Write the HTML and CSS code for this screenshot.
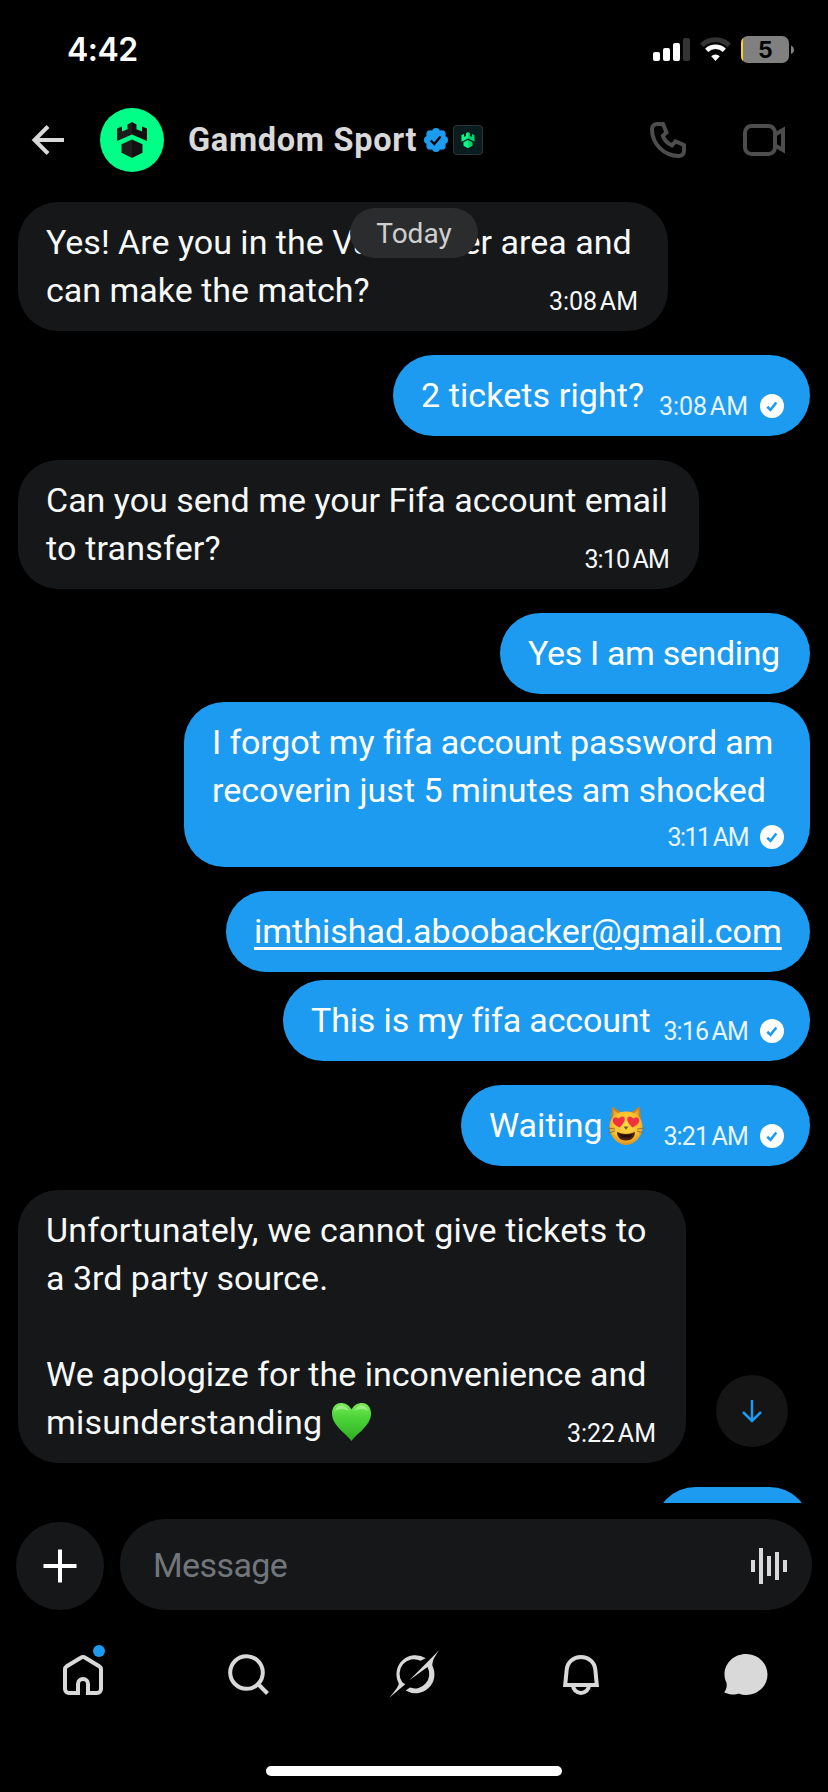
FILE: index.html
```html
<!DOCTYPE html>
<html lang="en">
<head>
<meta charset="utf-8">
<title>Gamdom Sport</title>
<link rel="stylesheet" href="styles.css">
</head>
<body>
<svg class="defs" width="0" height="0">
  <symbol id="sent" viewBox="0 0 24 24"><circle cx="12" cy="12" r="12" fill="#fff"/><path d="M7.3 12.8l3.2 3.1 5.8-7.4" fill="none" stroke="#1d9bf0" stroke-width="2.6"/></symbol>
</svg>
<div class="screen">
  <div class="status">
    <span class="clock">4:42</span>
    <svg class="status-icons" width="142" height="28" viewBox="0 0 142 28">
      <g fill="#fff"><rect x="0" y="16" width="7" height="9" rx="2"/><rect x="10" y="12" width="7" height="13" rx="2"/><rect x="20" y="7" width="7" height="18" rx="2"/></g>
      <rect x="30" y="2" width="7" height="23" rx="2" fill="#333"/>
      <path d="M48.8 9.2a20 20 0 0 1 27.400 0" fill="none" stroke="#333" stroke-width="5"/>
      <path d="M53.700 14.300a12.700 12.700 0 0 1 17.600 0" fill="none" stroke="#fff" stroke-width="4.600"/>
      <path d="M58.200 20.300a6.300 6.300 0 0 1 8.600 0L62.500 25z" fill="#fff"/>
      <rect x="88" y="0" width="48" height="27" rx="7" fill="#808080"/>
      <path d="M90 1.900Q88 3.600 88 7v13q0 3.400 2 5.100z" fill="#ffd60a"/>
      <path d="M138 9.500q3 1.300 3 4.300t-3 4.300z" fill="#808080"/>
      <text class="battery-text" x="112.300" y="21.600" text-anchor="middle">5</text>
    </svg>
  </div>

  <header class="header">
    <svg class="back" width="34" height="32" viewBox="0 0 34 32" fill="none" stroke="#d9d9d9" stroke-width="4"><path d="M3.500 16H33M17 2.500L3.500 16L17 29.500"/></svg>
    <svg class="avatar" width="64" height="64" viewBox="0 0 64 64">
      <circle cx="32" cy="32" r="32" fill="#00ff86"/>
      <path d="M17 20.500l5-2v5l5.500-2.300v-4.700l4.500-2.500v12.500l-15 6.500z" fill="#1d1d1d"/>
      <path d="M47 20.500l-5-2v5l-5.500-2.300v-4.700l-4.500-2.500v12.500l15 6.500z" fill="#111"/>
      <path d="M21.500 36.200L32 31.500v18.500l-10.500-5.300z" fill="#1d1d1d"/>
      <path d="M42.500 36.200L32 31.500v18.500l10.500-5.300z" fill="#111"/>
    </svg>
    <span class="name">Gamdom Sport</span>
    <svg class="verified" width="24" height="24" viewBox="0 0 24 24">
      <g fill="#1d9bf0"><circle cx="12" cy="12" r="9.500"/><circle cx="12" cy="4" r="4"/><circle cx="17.660" cy="6.340" r="4"/><circle cx="20" cy="12" r="4"/><circle cx="17.660" cy="17.660" r="4"/><circle cx="12" cy="20" r="4"/><circle cx="6.340" cy="17.660" r="4"/><circle cx="4" cy="12" r="4"/><circle cx="6.340" cy="6.340" r="4"/></g>
      <path d="M6.800 12.500l3.500 3.500 6.200-7.500" fill="none" stroke="#000" stroke-width="2.200"/>
    </svg>
    <svg class="affiliate" width="30" height="30" viewBox="0 0 30 30">
      <rect x=".5" y=".5" width="29" height="29" rx="3" fill="#0a1c1e" stroke="#2f3336"/>
      <path d="M8.500 10l2.500-1v3l2-1V8.500l2-1.500v6.500l-6.500 3.200z" fill="#00ff86"/>
      <path d="M21.500 10L19 9v3l-2-1V8.500L15 7v6.500l6.500 3.200z" fill="#00d470"/>
      <path d="M10.500 17.200l4.500-2.200v8.200l-4.500-2.400z" fill="#00ff86"/>
      <path d="M19.500 17.200L15 15v8.200l4.500-2.400z" fill="#00d470"/>
    </svg>
    <div class="calls">
      <svg width="36" height="36" viewBox="0 0 36 36" fill="none" stroke="#4d4d4d" stroke-width="4"><path d="M7 2H13L16.500 10.500L12.800 13.800C14.500 18.500 17.500 21.500 22 23.400L25.500 19.500L34 23V29A5 5 0 0 1 29 34C14 34 2 22 2 7A5 5 0 0 1 7 2Z"/></svg>
      <svg width="42" height="32" viewBox="0 0 42 32" fill="none" stroke="#4d4d4d" stroke-width="4"><rect x="2" y="2" width="30" height="28" rx="6.500"/><path d="M32 10.500L40 6V26L32 21.500"/></svg>
    </div>
  </header>

  <main class="thread">
    <div class="day">Today</div>
    <div class="msg in w650"><p>Yes! Are you in the Vancouver area and<br>can make the match?</p><span class="meta">3:08 AM</span></div>
    <div class="msg out w417"><p class="loose">2 tickets right?</p><span class="meta">3:08 AM<svg class="tick"><use href="#sent"/></svg></span></div>
    <div class="msg in w681"><p>Can you send me your Fifa account email<br><span class="looser">to transfer?</span></p><span class="meta narrow">3:10 AM</span></div>
    <div class="msg out joined w310"><p class="tighter">Yes I am sending</p></div>
    <div class="msg out stacked w626"><p><span class="tight">I forgot my fifa account password am</span><br>recoverin just 5 minutes am shocked</p><span class="meta narrower">3:11 AM<svg class="tick"><use href="#sent"/></svg></span></div>
    <div class="msg out joined w584"><p><span class="link">imthishad.aboobacker@gmail.com</span></p></div>
    <div class="msg out w527"><p class="tight">This is my fifa account</p><span class="meta narrow">3:16 AM<svg class="tick"><use href="#sent"/></svg></span></div>
    <div class="msg out w349"><p>Waiting<svg class="cat" viewBox="0 0 38 40">
      <defs><radialGradient id="fur" cx=".5" cy=".4" r=".6"><stop offset="0" stop-color="#ffdc45"/><stop offset=".7" stop-color="#f8bd2d"/><stop offset="1" stop-color="#d98f1d"/></radialGradient></defs>
      <path d="M4 15L5 2q0-1.500 1.500-.8L15 7zM34 15L33 2q0-1.500-1.500-.8L23 7z" fill="#c98422"/>
      <path d="M6.500 12V4l6 4zM31.500 12V4l-6 4z" fill="#e8a93a"/>
      <path d="M19 5.500c9.500 0 16.500 6 16.500 15.500C35.500 32 26 39 19 39S2.500 32 2.500 21C2.500 11.500 9.500 5.500 19 5.500z" fill="url(#fur)"/>
      <path d="M10 26q9 4 18 0c0 5-3.500 8.500-9 8.500S10 31 10 26z" fill="#4b210f"/>
      <path d="M13 28q6 2 12 0l-1 3q-5 1.500-10 0z" fill="#221008"/>
      <path d="M12.500 21.500C7 19 5 16 6 13q1.800-3 5.500-.5 3.500-3.500 6-1 1.600 4-5 10zM25.500 21.500C31 19 33 16 32 13q-1.800-3-5.500-.5-3.500-3.500-6-1-1.600 4 5 10z" fill="#f2333f"/>
      <path d="M16.500 20.500h5L19 23.800z" fill="#7d5338"/>
      <path d="M8 23L0 22M8 25L1 27M30 23l8-1M30 25l7 2" stroke="#8a6a3c" stroke-width=".9"/>
    </svg></p><span class="meta narrow">3:21 AM<svg class="tick"><use href="#sent"/></svg></span></div>
    <div class="msg in w668"><p><span class="looser">Unfortunately, we cannot give tickets to</span><br>a 3rd party source.<br><br>We apologize for the inconvenience and<br><span class="looser">misunderstanding</span> <svg class="heart" viewBox="0 0 39 38">
      <defs><linearGradient id="green" x1="0" y1="0" x2="0" y2="1"><stop offset="0" stop-color="#7ce95a"/><stop offset=".35" stop-color="#4fd63b"/><stop offset="1" stop-color="#2fae22"/></linearGradient></defs>
      <path d="M19.500 6.500C22 2 26 0 30 0c5.500 0 9 4.500 9 10.500C39 23 24 31 19.500 38 15 31 0 23 0 10.500 0 4.500 3.500 0 9 0c4 0 8 2 10.500 6.500z" fill="url(#green)"/>
      <path d="M3 8q2-6 7-5.500Q14 3 17 8q-8-4-14 0zM22 8q3-5 7-5.500 5-.5 7 5.500-6-4-14 0z" fill="#b8f7a0" opacity=".6"/>
    </svg></p><span class="meta">3:22 AM</span></div>
    <div class="msg out w155"></div>
    <button class="jump"><svg width="22" height="24" viewBox="0 0 22 24" fill="none" stroke="#1d9bf0" stroke-width="2.500"><path d="M11 1V22M2 13L11 22L20 13"/></svg></button>
  </main>

  <div class="composer">
    <button class="plus"><svg width="34" height="34" viewBox="0 0 34 34" stroke="#fff" stroke-width="4"><path d="M17 .5V33.500M.5 17H33.500"/></svg></button>
    <div class="field">
      <span class="placeholder">Message</span>
      <svg width="36" height="36" viewBox="0 0 36 36" fill="#d9d9d9"><rect x="0" y="12" width="4" height="12"/><rect x="8" y="0" width="4" height="36"/><rect x="16" y="8" width="4" height="20"/><rect x="24" y="4" width="4" height="28"/><rect x="32" y="12" width="4" height="12"/></svg>
    </div>
  </div>

  <nav class="nav">
    <a class="tab"><svg viewBox="0 0 48 48" fill="none" stroke="#d9d9d9" stroke-width="4"><path d="M21 42H10a4 4 0 0 1-4-4V18.500a4 4 0 0 1 1.800-3.300L21.800 6.700a4 4 0 0 1 4.400 0L40.200 15.200A4 4 0 0 1 42 18.500V38a4 4 0 0 1-4 4H27M19 42V33a5 5 0 0 1 10 0V42"/><circle cx="40" cy="0" r="6" fill="#1d9bf0" stroke="none"/></svg></a>
    <a class="tab"><svg viewBox="0 0 48 48" fill="none" stroke="#d9d9d9" stroke-width="4"><circle cx="22.500" cy="21.500" r="16.300"/><path d="M34 33L43.500 42.500"/></svg></a>
    <a class="tab"><svg viewBox="0 1 48 48" fill="#d9d9d9"><path d="M35.700 8.300A19 19 0 0 0 8.700 33.300Q9.500 36-.7 47.700L15.300 34.300 12.300 32.200A14.500 14.500 0 0 1 30.500 10.700z"/><path d="M49.300 0C46 5 42.500 9 42.300 15.500A19 19 0 0 1 15.700 40.600L20 37.600A14.500 14.500 0 0 0 37.500 17L19.300 30.300z"/></svg></a>
    <a class="tab"><svg viewBox="0 0 48 48" fill="none" stroke="#d9d9d9" stroke-width="4"><path d="M9.200 34L10.700 18.500C11.400 11 17.500 6 25 6s13.600 5 14.300 12.500L40.800 34Z"/><path d="M17 34c0 4.500 3.500 8 8 8s8-3.500 8-8"/></svg></a>
    <a class="tab"><svg viewBox="-1 1 48 48" fill="#d9d9d9"><path d="M24 4C36 4 45.500 13 45.500 24.500S36 45 24 45c-2.500 0-5-.5-7.500-1.500-3 1.500-9 1.500-14.300-1.300 2-2.500 3-5.500 2.300-9.500C3 29.500 2.500 27 2.500 24.500 2.500 13 12 4 24 4Z"/></svg></a>
  </nav>
  <div class="home-bar"></div>
</div>
</body>
</html>
```

FILE: styles.css
```css
* { box-sizing: border-box; }
body { margin: 0; background: #000; font-family: Roboto, "Liberation Sans", sans-serif; color: #f7f9f9; }
svg { display: block; overflow: visible; flex: none; }
button { border: 0; padding: 0; display: flex; align-items: center; justify-content: center; }
.defs { position: absolute; }
.screen { width: 828px; height: 1792px; display: flex; flex-direction: column; overflow: hidden; }

.status { height: 90px; flex: none; display: flex; justify-content: space-between; align-items: flex-start; padding: 0 33px 0 67px; }
.clock { font: 600 32px/40px Inter, sans-serif; color: #fff; margin-top: 30px; letter-spacing: -0.5px; }
.status-icons { margin-top: 36px; }
.battery-text { font: 700 23px Inter, sans-serif; fill: #000; }

.header { height: 100px; flex: none; display: flex; align-items: center; padding: 0 43px 0 31px; }
.avatar { margin-left: 35px; }
.name { width: 229px; margin-left: 24px; font-weight: 700; font-size: 32.5px; line-height: 40px; letter-spacing: 0.7px; color: #d9d9d9; white-space: nowrap; }
.verified { margin-left: 7px; }
.affiliate { margin-left: 5px; }
.calls { margin-left: auto; display: flex; align-items: center; gap: 57px; }

.thread { position: relative; height: 1313px; flex: none; padding: 12px 18px 0; display: flex; flex-direction: column; overflow: hidden; }
.day { position: absolute; left: 350px; top: 18px; width: 128px; height: 50px; border-radius: 25px; background: #2b2c2d; color: #cfcfcf; font-size: 28px; line-height: 51px; text-align: center; }
.msg { display: flex; flex: none; justify-content: space-between; align-items: flex-end; margin-bottom: 24px; padding: 16px 30px 17px 28px; min-height: 81px; border-radius: 40.5px; font-size: 34px; line-height: 48px; white-space: nowrap; }
.msg p { margin: 0; flex: 1; min-width: 0; }
.in { align-self: flex-start; background: #161719; }
.out { align-self: flex-end; background: #1d9bf0; color: #fff; padding-right: 26px; }
.joined { margin-bottom: 8px; }
.stacked { flex-direction: column; align-items: stretch; }
.stacked .meta { align-self: flex-end; margin-top: 12px; }
.meta { flex: none; display: flex; align-items: center; gap: 12px; margin-bottom: 0; font-size: 25px; line-height: 24px; word-spacing: -3.5px; }
.narrow { letter-spacing: -0.85px; word-spacing: -2px; }
.narrower { letter-spacing: -1.5px; word-spacing: -1.5px; }
.out .meta { color: #e8f5fe; }
.tick { width: 24px; height: 24px; margin: -8px 0 -6px; }
.loose { letter-spacing: 0.1px; }
.looser { letter-spacing: 0.2px; }
.tight { letter-spacing: -0.15px; }
.tighter { letter-spacing: -0.35px; }
.link { text-decoration: underline; text-decoration-thickness: 3px; text-underline-offset: 4px; }
.cat { display: inline-block; width: 38px; height: 40px; margin-left: 4px; vertical-align: 1px; }
.heart { display: inline-block; width: 39px; height: 38px; margin-left: 1px; vertical-align: 3px; }
.msg .cat, .msg .heart { margin-top: -10px; margin-bottom: -10px; }

.w650 { width: 650px; }
.w417 { width: 417px; }
.w681 { width: 681px; }
.w310 { width: 310px; }
.w626 { width: 626px; }
.w584 { width: 584px; }
.w527 { width: 527px; }
.w349 { width: 349px; }
.w668 { width: 668px; }
.w155 { width: 155px; }

.jump { position: absolute; left: 716px; top: 1185px; width: 72px; height: 72px; border-radius: 50%; background: #151515; }

.composer { flex: none; display: flex; align-items: flex-end; gap: 16px; padding: 16px 16px 0; height: 107px; }
.plus { width: 88px; height: 88px; border-radius: 50%; background: #161719; }
.field { flex: 1; height: 91px; border-radius: 45.5px; background: #161719; display: flex; align-items: center; justify-content: space-between; padding: 3px 25px 0 33px; }
.placeholder { color: #71767b; font-size: 34px; line-height: 40px; letter-spacing: -0.6px; margin-top: -3px; }

.nav { flex: none; height: 130px; display: grid; grid-template-columns: repeat(5, 1fr); justify-items: center; align-items: center; }
.tab svg { width: 48px; height: 48px; }
.home-bar { width: 296px; height: 10px; border-radius: 5px; background: #fff; margin: 26px auto 0; }
```
